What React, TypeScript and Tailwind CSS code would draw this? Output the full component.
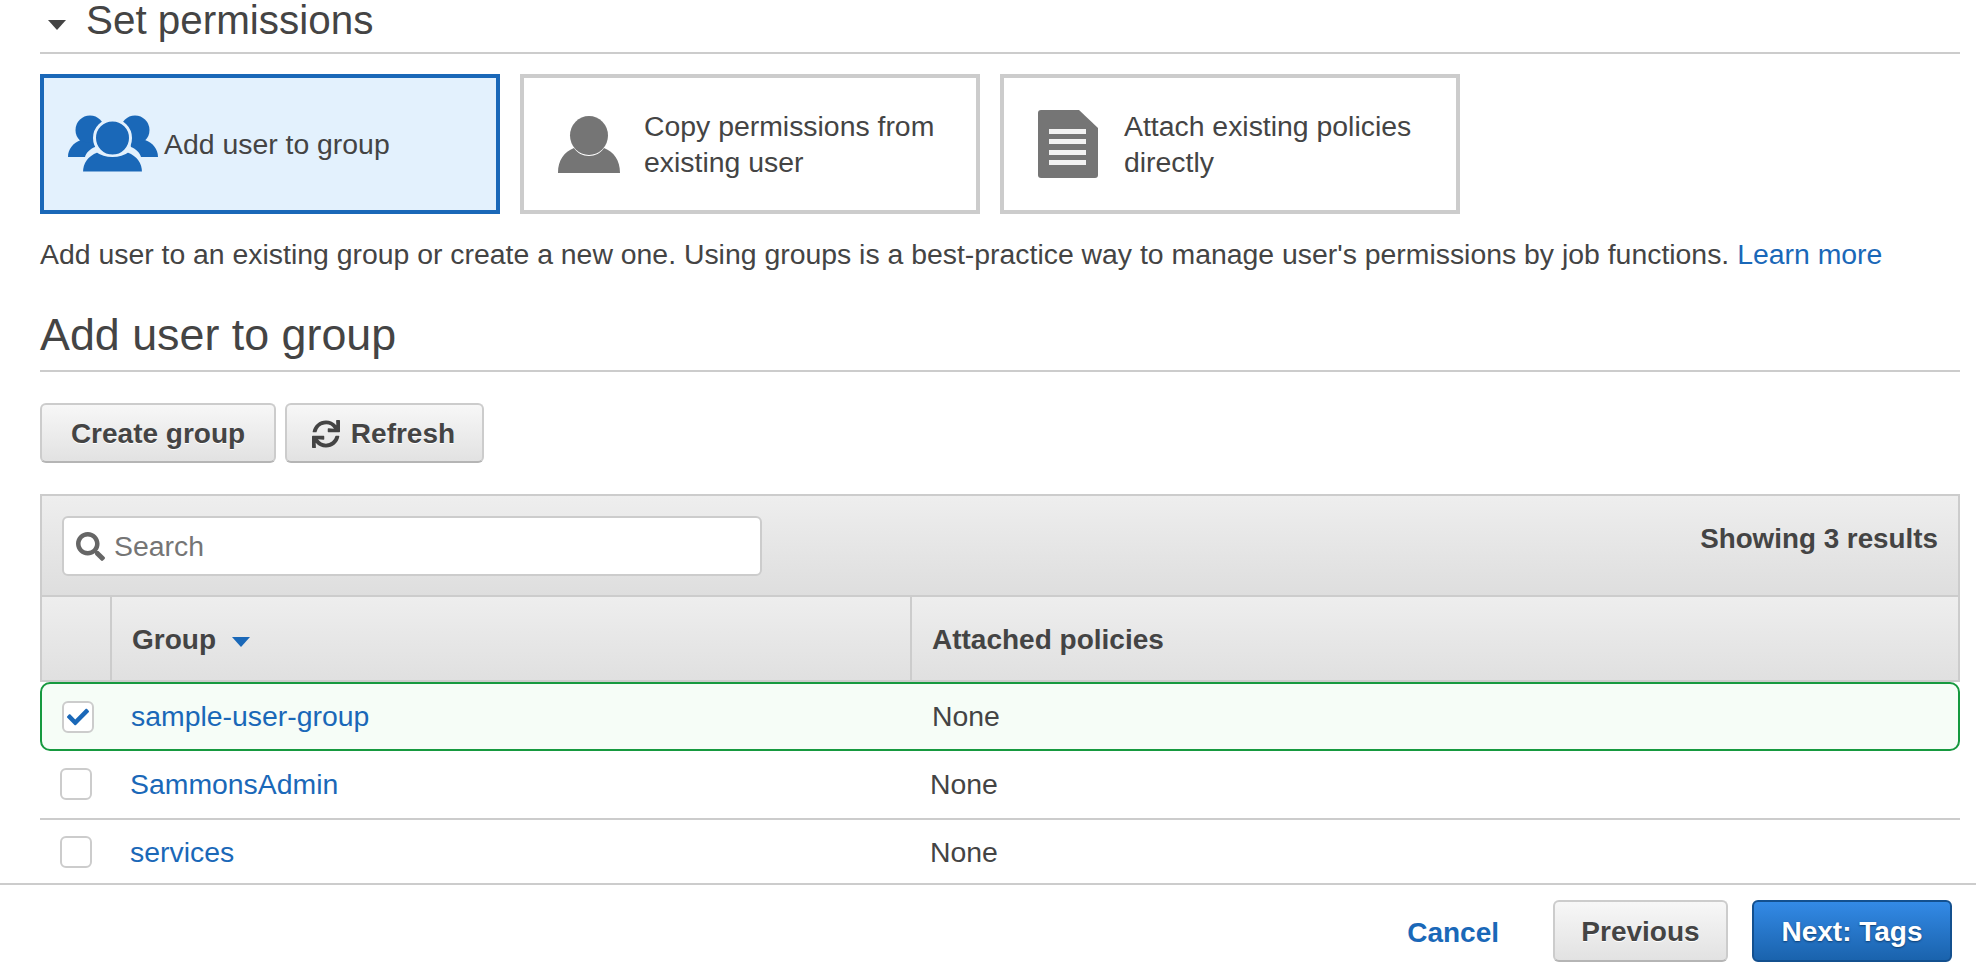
import { FaCheck, FaSearch, FaSync } from "react-icons/fa";

function UsersIcon() {
  return (
    <svg width="90" height="58" viewBox="0 0 90 58" className="shrink-0" fill="#1a68b8">
      <circle cx="22" cy="15" r="14.500" />
      <circle cx="67" cy="15" r="14.500" />
      <path d="M0 42c0-8 5-14 13-17 3 2 6 3 9 3h6l-1 4c-5 2-9 6-10 10H0z" />
      <path d="M90 42c0-8-5-14-13-17-3 2-6 3-9 3h-6l1 4c5 2 9 6 10 10h17z" />
      <circle cx="44.500" cy="23" r="18" stroke="#e3f1fd" strokeWidth="3" />
      <path
        d="M14 57.500c0-10 5-17 15-21 4 3 9.500 4.500 15.500 4.500s11.500-1.500 15.500-4.500c10 4 15 11 15 21H14z"
        stroke="#e3f1fd"
        strokeWidth="2"
      />
    </svg>
  );
}

function PersonIcon() {
  return (
    <svg width="62" height="57" viewBox="0 0 62 57" className="shrink-0" fill="#757575">
      <ellipse cx="31" cy="19.500" rx="19" ry="19.500" />
      <path d="M0 57c0-13 6-21 16-25 3 5 9 8 15 8s12-3 15-8c10 4 16 12 16 25H0z" />
    </svg>
  );
}

function DocIcon() {
  return (
    <svg width="60" height="68" viewBox="0 0 60 68" className="shrink-0">
      <path d="M3 0h38l19 18v47a3 3 0 0 1-3 3H3a3 3 0 0 1-3-3V3a3 3 0 0 1 3-3z" fill="#757575" />
      <g fill="#f2f2f2">
        <rect x="11" y="19" width="37" height="5" />
        <rect x="11" y="29" width="37" height="5" />
        <rect x="11" y="40" width="37" height="5" />
        <rect x="11" y="50" width="37" height="5" />
      </g>
    </svg>
  );
}

function Checkbox({ checked }: { checked?: boolean }) {
  return (
    <span className="flex h-[32px] w-[32px] shrink-0 items-center justify-center rounded-[6px] border-2 border-[#cccccc] bg-white">
      {checked && <FaCheck className="text-[22px] text-[#1a68b8]" />}
    </span>
  );
}

function Row({ name, last }: { name: string; last?: boolean }) {
  return (
    <div className={`flex h-[68px] shrink-0 items-center ${last ? "pb-[4px]" : "border-b-2 border-[#cccccc] pb-[2px]"}`}>
      <div className="flex w-[90px] shrink-0 pl-[20px]">
        <Checkbox />
      </div>
      <div className="w-[800px] shrink-0 text-[#1a68b8]">{name}</div>
      <div>None</div>
    </div>
  );
}

const btn =
  "flex items-center rounded-[6px] border-2 border-[#cccccc] border-b-[#b5b5b5] bg-gradient-to-b from-[#f7f7f7] to-[#e2e2e2] pt-[2px] text-[28px] font-bold text-[#444444] [text-shadow:0_1px_0_#ffffff]";

export default function App() {
  return (
    <div className="flex h-[968px] w-[1976px] flex-col overflow-hidden bg-white font-['Liberation_Sans',Arial,sans-serif] text-[28.4px] leading-[36px] text-[#444444]">
      <main className="flex min-h-0 flex-1 flex-col overflow-hidden pl-[40px] pr-[16px]">
        <div className="flex h-[54px] shrink-0 items-end border-b-2 border-[#cccccc] pb-[12px] pl-[8px]">
          <span className="mb-[10px] mr-[20px] h-0 w-0 border-x-[9px] border-t-[10px] border-x-transparent border-t-[#444444]" />
          <h2 className="text-[40.400px] leading-[40px] font-normal">Set permissions</h2>
        </div>

        <div className="mt-[20px] flex shrink-0 gap-[20px]">
          <div className="flex h-[140px] w-[460px] items-center gap-[6px] border-4 border-[#1a68b8] bg-[#e3f1fd] pl-[24px]">
            <UsersIcon />
            <span>Add user to group</span>
          </div>
          <div className="flex h-[140px] w-[460px] items-center gap-[24px] border-4 border-[#cccccc] bg-white pl-[34px]">
            <PersonIcon />
            <span>
              Copy permissions from
              <br />
              existing user
            </span>
          </div>
          <div className="flex h-[140px] w-[460px] items-center gap-[26px] border-4 border-[#cccccc] bg-white pl-[34px]">
            <DocIcon />
            <span>
              Attach existing policies
              <br />
              directly
            </span>
          </div>
        </div>

        <p className="mt-[22px] shrink-0">
          Add user to an existing group or create a new one. Using groups is a best-practice way to manage user's permissions by job functions.{" "}
          <span className="text-[#1a68b8]">Learn more</span>
        </p>

        <div className="mt-[33px] flex h-[67px] shrink-0 items-center border-b-2 border-[#cccccc] pb-[7px]">
          <h2 className="text-[44.800px] leading-[50px] font-normal">Add user to group</h2>
        </div>

        <div className="mt-[31px] flex shrink-0 gap-[9px]">
          <button className={`${btn} h-[60px] w-[236px] justify-center`}>Create group</button>
          <button className={`${btn} h-[60px] w-[199px] justify-center gap-[11px] pr-[2px]`}>
            <FaSync className="text-[28px]" />
            Refresh
          </button>
        </div>

        <div className="mt-[31px] flex flex-col">
          <div className="flex h-[103px] shrink-0 justify-between border-2 border-[#cccccc] bg-gradient-to-b from-[#eeeeee] to-[#dedede] pl-[20px] pr-[20px] pt-[20px]">
            <div className="flex h-[60px] w-[700px] items-center gap-[9px] rounded-[6px] border-2 border-[#cccccc] bg-white pl-[12px] text-[#757575]">
              <FaSearch className="text-[29px] text-[#666666]" />
              Search
            </div>
            <span className="mt-[5px] text-[27.800px] font-bold">Showing 3 results</span>
          </div>

          <div className="flex h-[85px] shrink-0 border-x-2 border-b-2 border-[#cccccc] bg-gradient-to-b from-[#eeeeee] to-[#e0e0e0] text-[28px] font-bold">
            <div className="w-[70px] shrink-0 border-r-2 border-[#cccccc]" />
            <div className="flex w-[800px] shrink-0 items-center gap-[16px] border-r-2 border-[#cccccc] pl-[20px] pt-[2px]">
              Group
              <span className="mt-[4px] h-0 w-0 border-x-[9px] border-t-[10px] border-x-transparent border-t-[#1a68b8]" />
            </div>
            <div className="flex items-center pl-[20px] pt-[2px]">Attached policies</div>
          </div>

          <div className="flex h-[69px] shrink-0 items-center rounded-[10px] border-2 border-[#16993f] bg-[#f6fdf7] pb-[2px]">
            <div className="flex w-[89px] shrink-0 pl-[20px] pt-[2px]">
              <Checkbox checked />
            </div>
            <div className="w-[801px] shrink-0 text-[#1a68b8]">sample-user-group</div>
            <div>None</div>
          </div>
          <div className="h-px shrink-0" />
          <Row name="SammonsAdmin" />
          <Row name="services" last />
        </div>
      </main>

      <footer className="flex h-[85px] shrink-0 items-start justify-end border-t-2 border-[#cccccc] pr-[24px] pt-[15px] text-[28px] font-bold">
        <span className="mr-[54px] mt-[15px] text-[#1a68b8]">Cancel</span>
        <button className={`${btn} mr-[24px] h-[62px] w-[175px] justify-center`}>Previous</button>
        <button className="flex h-[62px] w-[200px] items-center justify-center rounded-[6px] border-2 border-[#13508f] bg-gradient-to-b from-[#338ae6] to-[#1a63ad] pt-[2px] font-bold text-white [text-shadow:0_1px_2px_#0d3d70]">
          Next: Tags
        </button>
      </footer>
    </div>
  );
}
